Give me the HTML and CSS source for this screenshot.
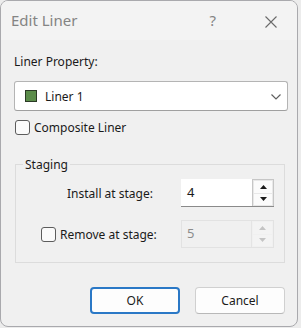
FILE: index.html
```html
<!DOCTYPE html>
<html>
<head>
<meta charset="utf-8">
<link rel="stylesheet" href="styles.css">
</head>
<body>
<div class="window">
  <div class="titlebar">
    <span class="title">Edit Liner</span>
    <span class="help">?</span>
    <svg class="close" width="12" height="12" viewBox="0 0 12 12"><path d="M0.5 0.5 L11.5 11.5 M11.5 0.5 L0.5 11.5" stroke="#6a6a6a" stroke-width="1.1" fill="none"/></svg>
  </div>
  <div class="content">
    <div class="label">Liner Property:</div>
    <div class="combo">
      <span class="swatch"></span>
      <span class="combo-text">Liner 1</span>
      <svg class="chevron" width="10" height="6" viewBox="0 0 10 6"><path d="M0.5 0.5 L5 5 L9.5 0.5" stroke="#606060" stroke-width="1.2" fill="none"/></svg>
    </div>
    <div class="check composite"><span class="box"></span><span>Composite Liner</span></div>
    <fieldset class="group">
      <legend>Staging</legend>
      <div class="row row-install">
        <span class="row-label">Install at stage:</span>
        <div class="spin">
          <span class="spin-value">4</span>
          <div class="spin-btns">
            <span class="spin-btn"><svg width="7" height="4" viewBox="0 0 7 4"><path d="M0 4 L3.5 0 L7 4 Z" fill="#1a1a1a"/></svg></span>
            <span class="spin-btn"><svg width="7" height="4" viewBox="0 0 7 4"><path d="M0 0 L3.5 4 L7 0 Z" fill="#1a1a1a"/></svg></span>
          </div>
        </div>
      </div>
      <div class="row row-remove">
        <div class="check"><span class="box"></span><span>Remove at stage:</span></div>
        <div class="spin disabled">
          <span class="spin-value">5</span>
          <div class="spin-btns">
            <span class="spin-btn"><svg width="7" height="4" viewBox="0 0 7 4"><path d="M0 4 L3.5 0 L7 4 Z" fill="#c4c4c4"/></svg></span>
            <span class="spin-btn"><svg width="7" height="4" viewBox="0 0 7 4"><path d="M0 0 L3.5 4 L7 0 Z" fill="#c4c4c4"/></svg></span>
          </div>
        </div>
      </div>
    </fieldset>
    <div class="buttons">
      <button class="btn btn-default">OK</button>
      <button class="btn">Cancel</button>
    </div>
  </div>
</div>
</body>
</html>
```

FILE: styles.css
```css
html, body {
  margin: 0;
  padding: 0;
  background: #ececec;
}
body {
  width: 301px;
  height: 328px;
  overflow: hidden;
  font-family: "Noto Sans", "Open Sans", sans-serif;
  font-size: 12px;
  color: #1a1a1a;
}
.window {
  box-sizing: border-box;
  width: 298px;
  height: 327px;
  border: 1px solid #a9a9ad;
  border-radius: 8px;
  background: #f0f0f0;
  overflow: hidden;
}
.titlebar {
  height: 39px;
  background: #f3f3f3;
  display: flex;
  align-items: center;
  padding-left: 10px;
}
.title {
  font-size: 15px;
  color: #848484;
  flex: 1;
  margin-top: -1px;
}
.help {
  font-size: 15px;
  color: #848484;
  margin-right: 49px;
  margin-top: -1px;
}
.close {
  margin-right: 20px;
  margin-top: 2px;
}
.content {
  padding: 14px 9px 0 13px;
}
.label {
  line-height: 16px;
}
.combo {
  box-sizing: border-box;
  margin-top: 11px;
  width: 274px;
  height: 30px;
  border: 1px solid #b4b4b4;
  border-bottom-color: #a0a0a0;
  border-radius: 3px;
  background: #fff;
  display: flex;
  align-items: center;
  padding-left: 10px;
  padding-right: 6px;
}
.swatch {
  box-sizing: border-box;
  width: 12px;
  height: 12px;
  background: #5b8c4a;
  border: 1px solid #2b3a25;
  margin-right: 8px;
}
.combo-text {
  flex: 1;
}
.chevron {
  margin-top: 1px;
}
.check {
  display: flex;
  align-items: center;
}
.composite {
  margin-top: 8px;
  margin-left: 1px;
}
.box {
  box-sizing: border-box;
  width: 15px;
  height: 15px;
  border: 1px solid #5c5c5c;
  border-radius: 3px;
  background: #fafafa;
  margin-right: 4px;
}
.group {
  box-sizing: border-box;
  margin: 20px 0 0 1px;
  width: 270px;
  height: 107px;
  border: 1px solid #dcdcdc;
  padding: 0 10px 0 0;
}
.group legend {
  padding: 0 2px;
  margin-left: 7px;
}
.row {
  display: flex;
  align-items: center;
}
.row-install {
  margin-top: 6px;
  padding-left: 51px;
}
.row-remove {
  margin-top: 13px;
  padding-left: 25px;
}
.spin {
  margin-left: auto;
  box-sizing: border-box;
  width: 93px;
  height: 28px;
  display: flex;
  background: #fff;
  border-bottom: 1px solid #8a8a8a;
}
.spin-value {
  flex: 1;
  padding-left: 6px;
  line-height: 27px;
  font-size: 13px;
}
.spin-btns {
  box-sizing: border-box;
  width: 22px;
  border: 1px solid #c6c6c6;
  border-bottom: none;
  display: flex;
  flex-direction: column;
  gap: 1px;
  padding: 1px;
  background: #e8e8e8;
}
.spin-btn {
  flex: 1;
  background: #fbfbfb;
  display: flex;
  align-items: center;
  justify-content: center;
}
.spin.disabled {
  background: #f0f0f0;
  border: 1px solid #e2e2e2;
}
.spin.disabled .spin-value {
  color: #8c8c8c;
  line-height: 25px;
  padding-left: 5px;
}
.spin.disabled .spin-btns {
  border-color: #e4e4e4;
  background: #f0f0f0;
  border-top: none;
  border-right: none;
}
.spin.disabled .spin-btn {
  background: #f3f3f3;
}
.buttons {
  display: flex;
  justify-content: flex-end;
  gap: 15px;
  margin-top: 24px;
  padding-right: 3px;
}
.btn {
  box-sizing: border-box;
  width: 90px;
  height: 27px;
  font-family: "Noto Sans", "Open Sans", sans-serif;
  font-size: 12px;
  color: #1a1a1a;
  background: #fdfdfd;
  border: 1px solid #d0d0d0;
  border-bottom-color: #b8b8b8;
  border-radius: 4px;
  padding: 0;
}
.btn-default {
  border: 2px solid #2a78c6;
}
```
